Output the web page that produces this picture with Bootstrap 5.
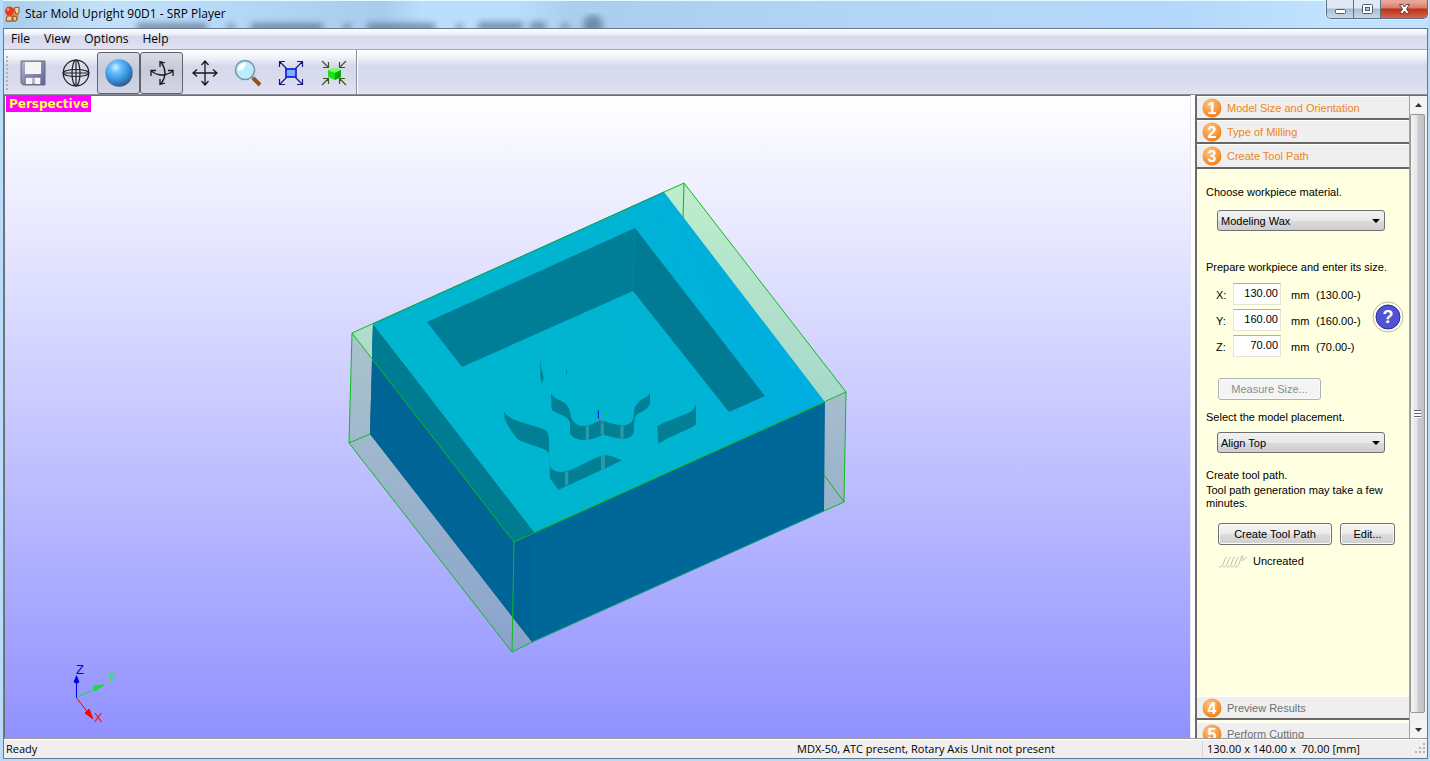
<!DOCTYPE html>
<html lang="en">
<head>
<meta charset="utf-8">
<meta name="viewport" content="width=device-width, initial-scale=1">
<title>Star Mold Upright 90D1 - SRP Player</title>
<link href="https://cdn.jsdelivr.net/npm/bootstrap@5.3.0/dist/css/bootstrap.min.css" rel="stylesheet">
<style>
  :root { --ui: "Open Sans", "Noto Sans", sans-serif; --panel: "Liberation Sans", Arial, sans-serif; }
  body { background: #b6d9f8; font: 11px/14px var(--panel); color: #000; }
  button, input, select { font: inherit; color: inherit; }
  .frame { border: solid #b9dcfb; border-width: 0 2px 2px 3px; }
  .titlebar { height: 28px; font: 12px/16px var(--ui); padding-left: 1px;
    background: linear-gradient(90deg, #a9cdea 0, #c4e0f8 100px, #b8daf9 200px, #a8ccee 380px, #bcdefd 420px, #bcdefd 510px, #aacdf0 570px, #b2d4f7 850px, #b4d8fb 1180px, #c0e2ff 1320px); }
  .titlebar::before { content: ""; position: absolute; inset: 0 0 auto; height: 1px; background: #e2fbff; }
  .ghost { position: absolute; left: 0; top: 0; }
  .caption-text { z-index: 1; }
  .winctl { align-self: flex-start; height: 19px; border: 1px solid #5c6e80; border-top: 0; border-radius: 0 0 5px 5px; overflow: hidden; box-shadow: 0 0 0 1px #d8eeff; z-index: 1; }
  .winctl button { border: 0; padding: 0; width: 27px; background: linear-gradient(#dfe9f3 0 8px, #a9bccf 9px, #c6dbef); border-right: 1px solid #5c6e80; display: grid; place-items: center; }
  .winctl .shut { width: 46px; border-right: 0; background: linear-gradient(#e8a598 0 2px, #d87b68 8px, #bb3019 9px, #d3664c); }
  .client { border: 1px solid #68788c; }
  .menus { height: 21px; padding-left: 7px; gap: 14px; font: 12px/16px var(--ui); background: linear-gradient(#fff, #e9ecf8 6px, #d5d9eb 7px, #dfe0f2 18px); border-bottom: 1px solid #a6a3b5; }
  .menus a { color: #000; text-decoration: none; }
  .tools { height: 45px; background: linear-gradient(#fff, #eef1f9 8px, #d5d9eb 16px, #d7dbed 30px, #e2e3f5); border-bottom: 1px solid #8b8b93; }
  .toolgroup { border-right: 1px solid #8e92a0; box-shadow: 1px 0 #fff; padding: 2px 1px 0 2px; }
  .grip { width: 3px; margin: 4px 2px 4px 0; border-left: 2px dotted #aeb3c4; }
  .toolbtn { width: 43px; height: 42px; padding: 0; border: 1px solid transparent; border-radius: 3px; background: none; display: grid; place-items: center; }
  .toolbtn.on { border-color: #5f616b; background: linear-gradient(#d9dbe3, #c6cad9 16px, #d2d5e5); }
  .view3d { background: linear-gradient(#fff, #9191ff); border: 1px solid #6e7078; border-bottom: 0; border-right-color: #e6e6f4; }
  .viewtag { position: absolute; left: 1px; top: 0; height: 16px; padding: 0 2px 0 3px; background: #f0f; color: #ff5; font: bold 12px/16px "DejaVu Sans", sans-serif; }
  .gizmo { position: absolute; left: 59px; bottom: 11px; }
  .side { width: 232px; margin-left: 4px; border-left: 2px solid #6b6b6b; border-top: 1px solid #6b6b6b; }
  .steps { background: #ffffe1; }
  .stephead { height: 24px; flex: none; padding: 0 0 0 5px; border: 0; border-top: 1px solid #fff; border-bottom: 2px solid #666; background: #efefef; color: #ee8519; gap: 5px; text-align: left; width: 100%; }
  .stephead.current { height: 25px; }
  .stephead.off { color: #707070; }
  .nextstep { height: 18px; padding-top: 2px; }
  .stepbody { padding: 16px 10px 0 9px; min-height: 0; overflow: hidden; }
  .pick { width: 168px; height: 21px; margin: 11px 0 0 11px; padding: 0 20px 0 3px; border: 1px solid #707070; border-radius: 3px; appearance: none;
    background: url("data:image/svg+xml,%3Csvg xmlns='http://www.w3.org/2000/svg' width='8' height='4'%3E%3Cpath d='M0 0h8L4 4z'/%3E%3C/svg%3E") no-repeat right 4px center, linear-gradient(#f2f2f2, #e8e8e8 50%, #dadada 50%, #cfcfcf); }
  .pick.near { margin-top: 8px; }
  .push { height: 22px; padding: 0 4px; border: 1px solid #707070; border-radius: 3px; background: linear-gradient(#f4f4f4, #ebebeb 50%, #dcdcdc 50%, #cfcfcf); box-shadow: inset 0 0 0 1px #fbfbfb; }
  .push:disabled { color: #8c8c8c; border-color: #adb2b5; background: #f4f4f4; }
  .measure { width: 103px; margin: 21px 0 10px 12px; }
  .create { width: 114px; }
  .edit { width: 55px; }
  .prepare { margin: 29px 0 9px; }
  .make { margin: 15px 0 2px; }
  .note { margin: 0 0 13px; line-height: 13px; }
  .indent { margin-left: 12px; }
  .state { gap: 5px; margin-top: 9px; }
  .sizes { row-gap: 4px; padding-left: 10px; }
  .sizes label { width: 17px; margin-top: 2px; }
  .sizes input { width: 48px; height: 22px; padding: 0 2px 2px; border: 1px solid #e3e3d8; border-top-color: #abadb3; background: #fff; text-align: right; }
  .sizes span { margin-top: 2px; }
  .sizes .unit { width: 25px; margin-left: 10px; }
  .help { width: 32px; height: 32px; padding: 0; border: 0; background: none; margin: 0 -5px 6px 0; }
  .bar { width: 18px; background: #f1f1f1; border-left: 1px solid #a3a3a3; }
  .bar button { height: 17px; border: 0; padding: 0; background: #f4f4f4; display: grid; place-items: center; }
  .thumb { margin: 1px 2px 8px 0; border: 1px solid #979797; border-radius: 2px; background: linear-gradient(90deg, #f5f5f5, #e4e4e6 45%, #c9cbd0 55%, #bfc1c7); }
  .thumb::before { content: ""; width: 7px; height: 8px; background: repeating-linear-gradient(#666 0 1px, #fff 1px 3px); }
  .status { height: 20px; padding-left: 2px; font: 11px/16px var(--ui); background: #f0eeee; border-top: 1px solid #9b9b9b; box-shadow: inset 0 1px #fff; }
  .machine { margin-left: auto; width: 405px; }
  .dims { width: 225px; border-left: 1px solid #d5d5d5; padding-left: 4px; }
</style>
</head>
<body class="vh-100 overflow-hidden">
<svg width="0" height="0" class="position-absolute" aria-hidden="true">
  <defs>
    <radialGradient id="orb" cx=".4" cy=".3" r=".75"><stop offset="0" stop-color="#ffc880"/><stop offset=".5" stop-color="#f9a04a"/><stop offset="1" stop-color="#f07c16"/></radialGradient>
    <radialGradient id="blueball" cx=".38" cy=".3" r=".75"><stop offset="0" stop-color="#d5f3ff"/><stop offset=".25" stop-color="#6cc0fb"/><stop offset=".6" stop-color="#3a94e2"/><stop offset="1" stop-color="#2c5580"/></radialGradient>
    <linearGradient id="disk" x1="0" y1="0" x2="1" y2="1"><stop offset="0" stop-color="#b4b5c6"/><stop offset="1" stop-color="#5c5ea8"/></linearGradient>
    <linearGradient id="topface" gradientUnits="userSpaceOnUse" x1="580" y1="380" x2="770" y2="305"><stop offset="0" stop-color="#00b5cf"/><stop offset=".45" stop-color="#00b4d3"/><stop offset="1" stop-color="#00aee0"/></linearGradient>
    <filter id="soft"><feGaussianBlur stdDeviation="3"/></filter>
  </defs>
</svg>
<div class="frame h-100 d-flex flex-column">
  <header class="titlebar position-relative d-flex align-items-center flex-shrink-0">
    <svg class="ghost" width="640" height="28" aria-hidden="true"><g fill="#46627c" opacity=".6" filter="url(#soft)"><path d="M134 23h70v9h-70zM224 24h8v6h-8zM248 23h72v9h-72zM340 24h8v6h-8zM364 23h68v9h-68zM453 24h7v6h-7zM475 22h45v9h-45zM527 22h16v9h-16zM558 24h8v6h-8z"/><circle cx="590" cy="25" r="10"/></g></svg>
    <svg class="caption-text" width="17" height="18" viewBox="0 0 17 18" aria-hidden="true"><path d="M3 8h5l1-5 6-1-1 13-3 2H2z" fill="#d98b52"/><path d="M10 3l5-1v6l-3 1z" fill="#f2d2ae" stroke="#8e5631"/><path d="M3 11h5v5H2zM9 11l4 1-1 4H9z" fill="#fac88f" stroke="#8e5631"/><circle cx="5.500" cy="6" r="4.500" fill="#e83c20"/><circle cx="4" cy="4.500" r="1.300" fill="#ff9b7c"/></svg>
    <span class="caption-text ms-1">Star Mold Upright 90D1 - SRP Player</span>
    <div class="winctl d-flex ms-auto">
      <button type="button" aria-label="Minimize"><svg width="13" height="18"><rect x="1.500" y="9.500" width="10" height="4" rx="1" fill="#fff" stroke="#525d6b"/></svg></button>
      <button type="button" aria-label="Maximize"><svg width="13" height="18"><rect x="1.500" y="4.500" width="10" height="9" rx="1" fill="#fff" stroke="#525d6b"/><rect x="4.500" y="7.500" width="4" height="3" fill="#b5c8da" stroke="#525d6b"/></svg></button>
      <button type="button" class="shut" aria-label="Close"><svg width="13" height="18"><path d="M1.500 4.500h3l2 2.500 2-2.500h3L8.500 9l3 4.500h-3l-2-2.500-2 2.500h-3l3-4.500z" fill="#fff" stroke="#5d4448"/></svg></button>
    </div>
  </header>

  <div class="client flex-grow-1 d-flex flex-column overflow-hidden">
    <nav class="menus d-flex align-items-center flex-shrink-0" aria-label="Main menu">
      <a href="#">File</a><a href="#">View</a><a href="#">Options</a><a href="#">Help</a>
    </nav>

    <div class="tools d-flex flex-shrink-0">
      <div class="toolgroup d-flex">
        <div class="grip"></div>
        <button type="button" class="toolbtn" aria-label="Save"><svg width="28" height="28"><path d="M2 2h24v24H4l-2-2z" fill="url(#disk)" stroke="#6b6c7a"/><path d="M6 3h16v12H6z" fill="#f4f4f5"/><path d="M6 18h16v7H6z" fill="#b9b9c8" stroke="#77778c"/><path d="M7 19h6v6H7zM16 19h5v6h-5z" fill="#f6f6f6"/></svg></button>
        <button type="button" class="toolbtn" aria-label="Wireframe"><svg width="28" height="28" fill="none" stroke="#222" stroke-width="1.200"><circle cx="14" cy="14" r="12.800"/><ellipse cx="14" cy="14" rx="12.800" ry="3.500"/><ellipse cx="14" cy="14" rx="4" ry="12.800"/><path d="M14 1v26M1 14h26"/></svg></button>
        <button type="button" class="toolbtn on" aria-label="Shaded" aria-pressed="true"><svg width="30" height="30"><circle cx="15" cy="15" r="13.700" fill="url(#blueball)"/></svg></button>
        <button type="button" class="toolbtn on" aria-label="Rotate" aria-pressed="true"><svg width="28" height="28" fill="none" stroke="#181818" stroke-width="1.300"><path d="M13 3q8 11 0 22M3 12q11 8 22 0M12 8V2.500l5 1.500M12 20v5.500l5-1.500M3 17v-5.500h5M25 17v-5.500h-5"/></svg></button>
        <button type="button" class="toolbtn" aria-label="Pan"><svg width="28" height="28" fill="none" stroke="#181818" stroke-width="1.300"><path d="M14 2v24M2 14h24M10.500 6L14 2l3.500 4M10.500 22l3.500 4 3.500-4M6 10.500L2 14l4 3.500M22 10.500l4 3.500-4 3.500"/></svg></button>
        <button type="button" class="toolbtn" aria-label="Zoom"><svg width="28" height="28"><path d="M19 19l7 7" stroke="#984f1c" stroke-width="4"/><path d="M17 17l3 3" stroke="#777" stroke-width="2"/><circle cx="11" cy="11" r="9.500" fill="#bcecfc" stroke="#7e95a3" stroke-width="1.600"/><path d="M4 12a7 7 0 0 1 8-8q-1 7-8 8" fill="#fff"/></svg></button>
        <button type="button" class="toolbtn" aria-label="Zoom to fit"><svg width="28" height="28" fill="none" stroke="#16167e" stroke-width="1.200"><path d="M2.500 8V2.500H8M2.500 2.500l7 7M20 2.500h5.500V8M25.500 2.500l-7 7M2.500 20v5.500H8M2.500 25.500l7-7M20 25.500h5.500V20M25.500 25.500l-7-7"/><rect x="9" y="10" width="10" height="8" fill="#75b4ff" stroke="#1111d8" stroke-width="1.600"/></svg></button>
        <button type="button" class="toolbtn" aria-label="Center object"><svg width="28" height="28" fill="none" stroke="#3a5a14" stroke-width="1.200"><path d="M2 2l6.500 6.500M8.500 3v5.500H3M26 2l-6.500 6.500M19.500 3v5.500H25M2 26l6.500-6.500M3 19.500h5.500V25M26 26l-6.500-6.500M25 19.500h-5.500V25"/><path d="M8 11l7-2 6 2v7l-6 3-7-3z" fill="#1be01b" stroke="none"/><path d="M8 11l7-2 6 2-6 3z" fill="#7bff6b" stroke="none"/><path d="M15 14l6-3v7l-6 3z" fill="#09a909" stroke="none"/></svg></button>
      </div>
    </div>

    <div class="flex-grow-1 d-flex overflow-hidden bg-white">
      <main class="view3d flex-grow-1 position-relative d-flex align-items-center justify-content-center overflow-hidden">
        <span class="viewtag">Perspective</span>
        <svg width="500" height="471" viewBox="348 181 500 471" class="flex-shrink-0" role="img" aria-label="Star mold model inside its workpiece">
          <path d="M352 332L349 442 512 651 844 501 846 391 514 541z" fill="rgb(107,167,127)" fill-opacity=".4"/>
          <path d="M352 332L684 182 846 391 514 541z" fill="rgb(115,235,125)" fill-opacity=".4"/>
          <path d="M684 182l-1 36M824 474l20 27" stroke="#18b018" fill="none"/>
          <path d="M373 323L370 433 532 641 824 510 825 401 534 531z" fill="#006899"/>
          <path d="M373 323L370 433 532 641 534 531z" fill="#006496"/>
          <path d="M373 323L372 358 514 541 534 531z" fill="#007c92"/>
          <path d="M373 323L664 191 825 401 534 531z" fill="url(#topface)"/>
          <path d="M427 321L635 227 633 290 462 366z" fill="#007e97"/>
          <path d="M635 227L765 395 729 411 633 290z" fill="#007b93"/>
          <g transform="translate(490 340) scale(.3333)" fill="#007f95">
            <path d="M151 45l3 36 7 30-5 18-5-22zM228 90l3-4v14l-2 2z"/>
            <path d="M42 212Q55 232 90 242L158 263Q177 268 177 295L178 365Q180 391 210 393 230 394 250 383L318 350Q340 339 360 344L397 358 340 385 205 446 180 412 178 337Q168 324 140 317L85 297Q60 270 44 233z"/>
            <path d="M183 155Q188 169 210 178 236 190 240 214 245 251 276 255 298 256 318 244 334 236 350 243 382 253 400 254 421 253 430 235L433 205Q440 180 465 170 475 165 480 155L480 190Q473 204 455 213 435 218 433 240L431 276Q422 293 397 294 370 290 340 281 315 294 290 298 245 296 240 275L240 245Q236 230 215 222 188 212 185 205z"/>
            <path d="M502 255Q514 247 545 236L594 216Q614 208 618 190L618 250Q610 258 590 266L530 293 505 308z"/>
            <g fill="#2b97aa"><path d="M287 256h10v41h-10zM332 241h10v40h-10zM391 254h10v39h-10zM225 393l10-3v40l-10 5zM333 345l12-3v41l-12 5z"/></g>
            <g fill="none" stroke-width="3"><path d="M325 208v24" stroke="#00f"/><path d="M328 232l22-18M320 193l8-2" stroke="#17cf5a"/><path d="M325 232l15 17" stroke="#b32b67"/></g>
          </g>
          <g fill="none" stroke="#0dbb1d"><path d="M352 332L684 182 846 391 514 541zM352 332L349 442 512 651 514 541M512 651l20-10M349 442l21-9M824 510l20-9 2-110"/></g>
          <path d="M373 323L664 191M532 641L824 510" stroke="#139b79" fill="none"/>
        </svg>
        <svg class="gizmo" width="60" height="64" viewBox="64 663 60 64" fill="none" aria-label="Axes"><path d="M76.500 697v-20" stroke="#0000e8"/><path d="M76.500 675l-3 7 3 2 3-2z" fill="#0000e8"/><path d="M77 697l26-11" stroke="#14e03c"/><path d="M104 685l-11 1 2 5z" fill="#14e03c" stroke="#14e03c"/><path d="M76 697l16 21" stroke="#e00020"/><path d="M93 719l-8-6 4-4z" fill="#f00" stroke="#f00"/><g font-family="Liberation Sans, sans-serif" font-size="13"><text x="76" y="674" fill="#0000e0">Z</text><text x="107" y="682" fill="#18f040" stroke="#18f040" stroke-width=".4">Y</text><text x="94" y="722" fill="#f01020">X</text></g></svg>
      </main>

      <aside class="side d-flex flex-shrink-0 overflow-hidden">
        <div class="steps flex-grow-1 d-flex flex-column overflow-hidden">
          <button type="button" class="stephead d-flex align-items-center"><svg width="20" height="20"><circle cx="10" cy="10" r="9.500" fill="url(#orb)"/><text x="10" y="16" text-anchor="middle" font-family="Liberation Sans, sans-serif" font-size="16" font-weight="bold" fill="#fff">1</text></svg>Model Size and Orientation</button>
          <button type="button" class="stephead d-flex align-items-center"><svg width="20" height="20"><circle cx="10" cy="10" r="9.500" fill="url(#orb)"/><text x="10" y="16" text-anchor="middle" font-family="Liberation Sans, sans-serif" font-size="16" font-weight="bold" fill="#fff">2</text></svg>Type of Milling</button>
          <button type="button" class="stephead current d-flex align-items-center"><svg width="20" height="20"><circle cx="10" cy="10" r="9.500" fill="url(#orb)"/><text x="10" y="16" text-anchor="middle" font-family="Liberation Sans, sans-serif" font-size="16" font-weight="bold" fill="#fff">3</text></svg>Create Tool Path</button>
          <form class="stepbody flex-grow-1">
            <label for="material" class="d-block">Choose workpiece material.</label>
            <select id="material" class="pick d-block"><option>Modeling Wax</option></select>
            <p class="prepare">Prepare workpiece and enter its size.</p>
            <div class="d-flex align-items-center justify-content-between">
              <div class="sizes d-grid">
                <div class="d-flex align-items-center"><label for="sx">X:</label><input id="sx" value="130.00"><span class="unit">mm</span><span>(130.00-)</span></div>
                <div class="d-flex align-items-center"><label for="sy">Y:</label><input id="sy" value="160.00"><span class="unit">mm</span><span>(160.00-)</span></div>
                <div class="d-flex align-items-center"><label for="sz">Z:</label><input id="sz" value="70.00"><span class="unit">mm</span><span>(70.00-)</span></div>
              </div>
              <button type="button" class="help" aria-label="Help"><svg class="d-block" width="32" height="32"><circle cx="16" cy="16" r="15" fill="#fffff4" stroke="#b8b8a0"/><circle cx="16" cy="16" r="12" fill="#5053d6" stroke="#2b2d96"/><text x="16" y="22" text-anchor="middle" font-family="Liberation Sans, sans-serif" font-size="18" font-weight="bold" fill="#fff">?</text></svg></button>
            </div>
            <button type="button" class="push measure d-block" disabled>Measure Size...</button>
            <label for="placement" class="d-block">Select the model placement.</label>
            <select id="placement" class="pick near d-block"><option>Align Top</option></select>
            <p class="make">Create tool path.</p>
            <p class="note">Tool path generation may take a few minutes.</p>
            <div class="indent d-flex gap-2"><button type="button" class="push create">Create Tool Path</button><button type="button" class="push edit">Edit...</button></div>
            <div class="indent state d-flex align-items-center"><svg width="30" height="14" fill="none" stroke="#c2c2b2"><path d="M1 13q4 0 5-5t3-5M5 13q4 0 5-5t3-5M9 13q4 0 5-5t3-5M13 13q4 0 5-5t3-5M17 13q4 0 5-6t3-5l-1 5 5-4"/></svg>Uncreated</div>
          </form>
          <button type="button" class="stephead off d-flex align-items-center"><svg width="20" height="20"><circle cx="10" cy="10" r="9.500" fill="url(#orb)"/><text x="10" y="16" text-anchor="middle" font-family="Liberation Sans, sans-serif" font-size="16" font-weight="bold" fill="#fff">4</text></svg>Preview Results</button>
          <div class="nextstep overflow-hidden flex-shrink-0"><button type="button" class="stephead off d-flex align-items-center"><svg width="20" height="20"><circle cx="10" cy="10" r="9.500" fill="url(#orb)"/><text x="10" y="16" text-anchor="middle" font-family="Liberation Sans, sans-serif" font-size="16" font-weight="bold" fill="#fff">5</text></svg>Perform Cutting</button></div>
        </div>
        <div class="bar d-flex flex-column flex-shrink-0">
          <button type="button" aria-label="Scroll up"><svg width="7" height="4"><path d="M0 4h7L3.500 0z" fill="#333"/></svg></button>
          <div class="thumb flex-grow-1 d-flex align-items-center justify-content-center"></div>
          <button type="button" aria-label="Scroll down"><svg width="7" height="4"><path d="M0 0h7L3.500 4z" fill="#333"/></svg></button>
        </div>
      </aside>
    </div>

    <footer class="status d-flex align-items-center flex-shrink-0">
      <span>Ready</span>
      <span class="machine">MDX-50, ATC present, Rotary Axis Unit not present</span>
      <span class="dims d-flex justify-content-between">130.00 x 140.00 x&nbsp; 70.00 [mm]<svg width="12" height="14" fill="#b5b5b5"><path d="M8 2h2v2H8zM8 6h2v2H8zM8 10h2v2H8zM4 6h2v2H4zM4 10h2v2H4zM0 10h2v2H0z"/></svg></span>
    </footer>
  </div>
</div>
<script src="https://cdn.jsdelivr.net/npm/bootstrap@5.3.0/dist/js/bootstrap.bundle.min.js"></script>
</body>
</html>
